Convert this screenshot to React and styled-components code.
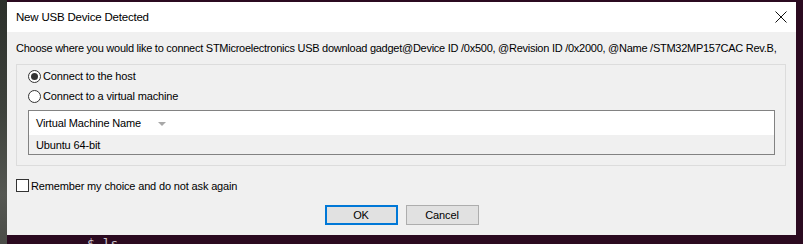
import React from "react";
import styled, { createGlobalStyle } from "styled-components";

const Global = createGlobalStyle`
  html, body { margin: 0; padding: 0; }
  body {
    background: #2b0a20;
    font-family: "Liberation Sans", Arial, sans-serif;
    font-size: 11px;
    letter-spacing: -0.15px;
    color: #000;
    overflow: hidden;
  }
`;

const Desktop = styled.div`
  width: 803px;
  height: 244px;
  overflow: hidden;
  padding: 2px 0 0 7px;
  box-sizing: border-box;
  background:
    linear-gradient(180deg, #2c302b 0%, #3d413b 45%, #555752 80%, #4a4c47 100%) left top / 7px 100% no-repeat,
    #2b0a20;
`;

const Dialog = styled.div`
  width: 789px;
  height: 233px;
  background: #f0f0f0;
  display: flex;
  flex-direction: column;
`;

const TitleBar = styled.div`
  height: 30px;
  background: #ffffff;
  display: flex;
  align-items: center;
  justify-content: space-between;
  padding: 0 9px 0 9px;
  font-size: 11.5px;
  letter-spacing: -0.2px;
`;

const CloseButton = styled.div`
  width: 12px;
  height: 12px;
  display: flex;
`;

const Content = styled.div`
  padding: 0 10px 0 9px;
  display: flex;
  flex-direction: column;
`;

const Instruction = styled.div`
  height: 32px;
  display: flex;
  align-items: center;
  white-space: nowrap;
  letter-spacing: -0.26px;
`;

const GroupBox = styled.div`
  height: 102px;
  box-sizing: border-box;
  border: 1px solid #dcdcdc;
  padding: 1px 10px 0 11px;
  display: flex;
  flex-direction: column;
`;

const RadioRow = styled.label`
  height: 20px;
  display: flex;
  align-items: center;
  gap: 2px;
`;

const RadioCircle = styled.span`
  width: 13px;
  height: 13px;
  box-sizing: border-box;
  border-radius: 50%;
  border: 1px solid #333;
  background: #fff;
  display: flex;
  align-items: center;
  justify-content: center;
  &::after {
    content: "";
    width: 7px;
    height: 7px;
    border-radius: 50%;
    background: ${(p) => (p.$checked ? "#333" : "transparent")};
  }
`;

const List = styled.div`
  margin-top: 4px;
  height: 45px;
  box-sizing: border-box;
  border: 1px solid #828282;
  display: flex;
  flex-direction: column;
`;

const Header = styled.div`
  height: 24px;
  background: #fff;
  display: flex;
  align-items: center;
  padding-left: 7px;
  gap: 17px;
`;

const SortArrow = styled.span`
  width: 0;
  height: 0;
  border-left: 4.5px solid transparent;
  border-right: 4.5px solid transparent;
  border-top: 4px solid #a8a8a8;
  margin-top: 1px;
`;

const Row = styled.div`
  flex: 1;
  display: flex;
  align-items: center;
  padding-left: 7px;
`;

const CheckRow = styled.label`
  margin-top: 13px;
  height: 13px;
  display: flex;
  align-items: center;
  gap: 2px;
`;

const CheckBox = styled.span`
  width: 13px;
  height: 13px;
  box-sizing: border-box;
  border: 1px solid #333;
  background: #fff;
`;

const Buttons = styled.div`
  margin-top: 13px;
  display: flex;
  justify-content: center;
  gap: 8px;
  padding-left: 1px;
`;

const Button = styled.button`
  width: 73px;
  height: 20px;
  box-sizing: border-box;
  background: #e1e1e1;
  border: ${(p) => (p.$default ? "2px solid #0078d7" : "1px solid #adadad")};
  font-family: inherit;
  font-size: 11px;
  letter-spacing: inherit;
  color: #000;
  padding: 0;
  margin: 0;
`;

const TerminalLine = styled.div`
  margin: 1px 0 0 80px;
  height: 12px;
  overflow: hidden;
  font-family: "DejaVu Sans Mono", monospace;
  font-size: 13px;
  line-height: 16px;
  color: #c8c0c8;
  letter-spacing: 0;
`;

export default function App() {
  return (
    <>
      <Global />
      <Desktop>
        <Dialog>
          <TitleBar>
            <span>New USB Device Detected</span>
            <CloseButton>
              <svg width="12" height="12" viewBox="0 0 12 12">
                <path d="M0.5 0.5 L11.5 11.5 M11.5 0.5 L0.5 11.5" stroke="#111" strokeWidth="1" fill="none" />
              </svg>
            </CloseButton>
          </TitleBar>
          <Content>
            <Instruction>
              Choose where you would like to connect STMicroelectronics USB download gadget@Device ID /0x500, @Revision ID /0x2000, @Name /STM32MP157CAC Rev.B,
            </Instruction>
            <GroupBox>
              <RadioRow>
                <RadioCircle $checked />
                Connect to the host
              </RadioRow>
              <RadioRow>
                <RadioCircle />
                Connect to a virtual machine
              </RadioRow>
              <List>
                <Header>
                  Virtual Machine Name
                  <SortArrow />
                </Header>
                <Row>Ubuntu 64-bit</Row>
              </List>
            </GroupBox>
            <CheckRow>
              <CheckBox />
              Remember my choice and do not ask again
            </CheckRow>
            <Buttons>
              <Button $default>OK</Button>
              <Button>Cancel</Button>
            </Buttons>
          </Content>
        </Dialog>
        <TerminalLine>$ ls</TerminalLine>
      </Desktop>
    </>
  );
}
